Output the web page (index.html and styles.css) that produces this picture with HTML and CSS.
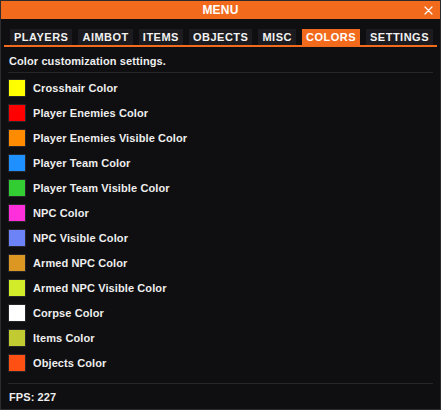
FILE: index.html
```html
<!DOCTYPE html>
<html lang="en">
<head>
    <meta charset="UTF-8">
    <meta name="viewport" content="width=device-width, initial-scale=1.0">
    <title>Menu</title>
    <link rel="stylesheet" href="styles.css">
</head>
<body>
    <div class="window">
        <div class="titlebar">
            <span></span>
            <span class="title">MENU</span>
            <span class="close">
                <svg width="9" height="9" viewBox="0 0 9 9">
                    <path d="M1 1 L8 8 M8 1 L1 8" stroke="#fff" stroke-width="1.2" stroke-linecap="round"/>
                </svg>
            </span>
        </div>
        <div class="tabs">
            <div class="tab">PLAYERS</div>
            <div class="tab">AIMBOT</div>
            <div class="tab">ITEMS</div>
            <div class="tab">OBJECTS</div>
            <div class="tab">MISC</div>
            <div class="tab active">COLORS</div>
            <div class="tab">SETTINGS</div>
        </div>
        <div class="content">
            <div class="desc">Color customization settings.</div>
            <div class="list">
                <div class="row"><span class="swatch" style="background:#ffff00"></span>Crosshair Color</div>
                <div class="row"><span class="swatch" style="background:#ff0000"></span>Player Enemies Color</div>
                <div class="row"><span class="swatch" style="background:#ff8c00"></span>Player Enemies Visible Color</div>
                <div class="row"><span class="swatch" style="background:#1e90ff"></span>Player Team Color</div>
                <div class="row"><span class="swatch" style="background:#32cd32"></span>Player Team Visible Color</div>
                <div class="row"><span class="swatch" style="background:#ff30dc"></span>NPC Color</div>
                <div class="row"><span class="swatch" style="background:#6c83f8"></span>NPC Visible Color</div>
                <div class="row"><span class="swatch" style="background:#dc9622"></span>Armed NPC Color</div>
                <div class="row"><span class="swatch" style="background:#d2ec2a"></span>Armed NPC Visible Color</div>
                <div class="row"><span class="swatch" style="background:#ffffff"></span>Corpse Color</div>
                <div class="row"><span class="swatch" style="background:#c2ca32"></span>Items Color</div>
                <div class="row"><span class="swatch" style="background:#ff5014"></span>Objects Color</div>
            </div>
            <div class="footer">FPS: 227</div>
        </div>
    </div>
</body>
</html>
```

FILE: styles.css
```css
body {
    margin: 0;
    padding: 0;
    background-color: #0f0f11;
    font-family: "Liberation Sans", Arial, sans-serif;
    font-weight: bold;
    color: #eeeeee;
}
.window {
    width: 441px;
    height: 410px;
    box-sizing: border-box;
    border: 1px solid #2c2c2e;
    background-color: #0f0f11;
    display: flex;
    flex-direction: column;
}
.titlebar {
    height: 18px;
    background-color: #f26b1d;
    display: grid;
    grid-template-columns: 1fr auto 1fr;
    align-items: center;
    padding: 0 7px;
}
.title {
    color: #fff;
    font-size: 12px;
    letter-spacing: 0.2px;
}
.close {
    justify-self: end;
    display: flex;
}
.tabs {
    display: flex;
    gap: 6px;
    margin: 10px 3px 0;
    padding: 0 6px;
    border-bottom: 2px solid #f26b1d;
}
.tab {
    height: 16px;
    line-height: 17px;
    padding: 0 4px;
    background-color: #1c1c20;
    color: #f2f2f2;
    font-size: 11px;
    letter-spacing: 0.5px;
}
.tab.active {
    background-color: #f26b1d;
    color: #fff;
}
.content {
    flex: 1;
    display: flex;
    flex-direction: column;
    padding: 0 7px;
}
.desc {
    font-size: 11px;
    line-height: 14px;
    padding: 7px 0 4px 1px;
    border-bottom: 1px solid #26262a;
    letter-spacing: 0.1px;
}
.list {
    flex: 1;
    display: flex;
    flex-direction: column;
    gap: 7px;
    padding-top: 6px;
}
.row {
    display: flex;
    align-items: center;
    gap: 7px;
    height: 18px;
    font-size: 11px;
    letter-spacing: 0.1px;
}
.swatch {
    width: 16px;
    height: 16px;
    border: 1px solid #26262a;
}
.footer {
    border-top: 1px solid #26262a;
    font-size: 11px;
    line-height: 14px;
    padding: 6px 0 5px 1px;
    letter-spacing: 0.1px;
}
```
